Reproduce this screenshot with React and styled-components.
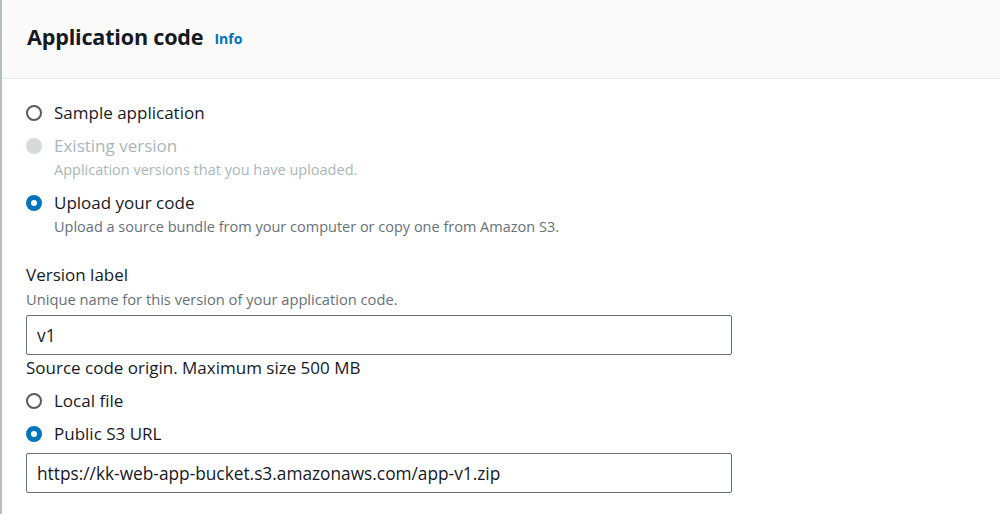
import React from "react";
import styled, { createGlobalStyle } from "styled-components";

const GlobalStyle = createGlobalStyle`
  html, body {
    margin: 0;
    padding: 0;
    background: #fff;
  }
  body {
    font-family: "Open Sans", "Liberation Sans", sans-serif;
    color: #16191f;
  }
`;

const Panel = styled.section`
  width: 1000px;
  height: 514px;
  border-left: 2px solid #b4bfc0;
  box-sizing: border-box;
  overflow: hidden;
  background: #fff;
`;

const Header = styled.header`
  height: 79px;
  box-sizing: border-box;
  background: #fafafa;
  border-bottom: 1px solid #e5e8e8;
  display: flex;
  align-items: center;
  gap: 11px;
  padding: 0 25px 6px;
`;

const Title = styled.h2`
  margin: 0;
  font-size: 21.6px;
  font-weight: 700;
  letter-spacing: -0.2px;
  color: #16191f;
`;

const InfoLink = styled.a`
  font-size: 14px;
  font-weight: 700;
  color: #0073bb;
  text-decoration: none;
  margin-top: 4px;
`;

const Body = styled.div`
  padding: 22px 24px 0;
  display: flex;
  flex-direction: column;
`;

const RadioGroup = styled.div`
  display: flex;
  flex-direction: column;
  gap: ${(p) => p.$gap || 9}px;
`;

const RadioItem = styled.label`
  display: grid;
  grid-template-columns: 16px 1fr;
  column-gap: 12px;
  align-items: center;
`;

const Dot = styled.span`
  width: 16px;
  height: 16px;
  box-sizing: border-box;
  border-radius: 50%;
  border: ${(p) =>
    p.$checked ? "5px solid #0073bb" : p.$disabled ? "none" : "2px solid #545b64"};
  background: ${(p) => (p.$disabled ? "#d5dbdb" : "#fff")};
`;

const RadioLabel = styled.span`
  font-size: 17px;
  line-height: 24px;
  color: ${(p) => (p.$disabled ? "#aab7b8" : "#16191f")};
`;

const RadioDesc = styled.span`
  grid-column: 2;
  font-size: 14.5px;
  line-height: 24px;
  color: ${(p) => (p.$disabled ? "#aab7b8" : "#687078")};
`;

const Field = styled.div`
  margin-top: 24px;
  display: flex;
  flex-direction: column;
`;

const FieldLabel = styled.div`
  font-size: 17px;
  line-height: 24px;
`;

const FieldDesc = styled.div`
  font-size: 14.7px;
  line-height: 24px;
  color: #687078;
`;

const Input = styled.input`
  width: 706px;
  height: 40px;
  box-sizing: border-box;
  border: 1px solid #687078;
  border-radius: 2px;
  padding: 0 10px;
  font-family: inherit;
  font-size: 17.3px;
  color: #16191f;
  margin-top: ${(p) => p.$top || 0}px;
  outline: none;
`;

const Constraint = styled.div`
  font-size: 17px;
  line-height: 24px;
  margin-top: 1px;
  margin-bottom: 9px;
`;

function Radio({ label, desc, checked, disabled }) {
  return (
    <RadioItem>
      <Dot $checked={checked} $disabled={disabled} />
      <RadioLabel $disabled={disabled}>{label}</RadioLabel>
      {desc && <RadioDesc $disabled={disabled}>{desc}</RadioDesc>}
    </RadioItem>
  );
}

export default function App() {
  return (
    <>
      <GlobalStyle />
      <Panel>
        <Header>
          <Title>Application code</Title>
          <InfoLink href="#">Info</InfoLink>
        </Header>
        <Body>
          <RadioGroup>
            <Radio label="Sample application" />
            <Radio
              label="Existing version"
              desc="Application versions that you have uploaded."
              disabled
            />
            <Radio
              label="Upload your code"
              desc="Upload a source bundle from your computer or copy one from Amazon S3."
              checked
            />
          </RadioGroup>
          <Field>
            <FieldLabel>Version label</FieldLabel>
            <FieldDesc>Unique name for this version of your application code.</FieldDesc>
            <Input $top={4} defaultValue="v1" />
            <Constraint>Source code origin. Maximum size 500 MB</Constraint>
            <RadioGroup>
              <Radio label="Local file" />
              <Radio label="Public S3 URL" checked />
            </RadioGroup>
            <Input
              $top={7}
              defaultValue="https://kk-web-app-bucket.s3.amazonaws.com/app-v1.zip"
            />
          </Field>
        </Body>
      </Panel>
    </>
  );
}
